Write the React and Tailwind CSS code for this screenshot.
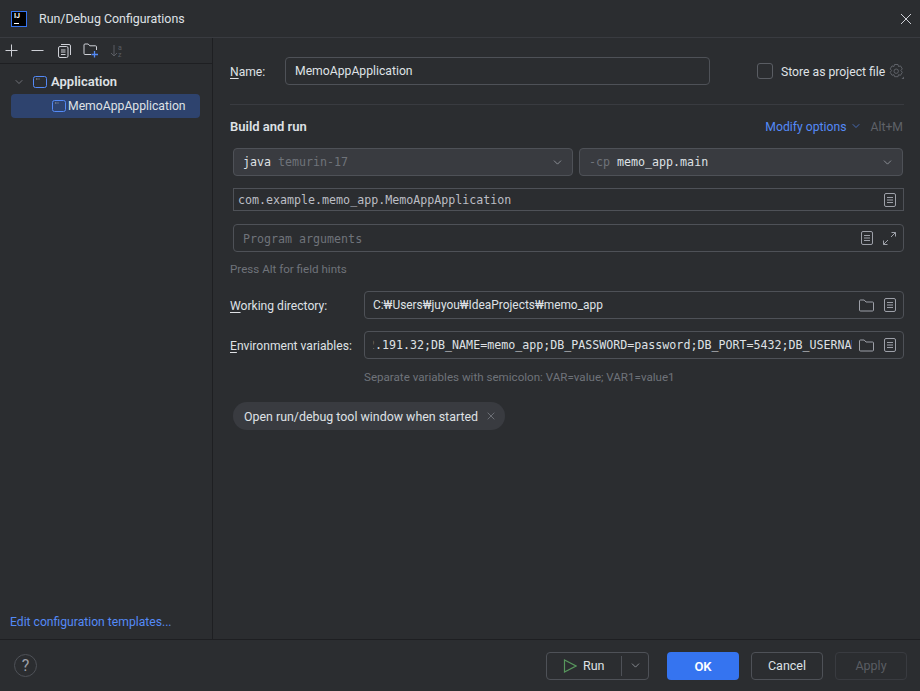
import React from 'react';
import { ChevronDown } from 'lucide-react';

const ui = "font-['Roboto','Noto_Sans_CJK_KR',sans-serif]";
const mono = "font-['DejaVu_Sans_Mono',monospace]";

function CrossIcon({ size = 12, color = "#ced0d6", className = "" }) {
  return (
    <svg width={size} height={size} viewBox="0 0 12 12" fill="none" stroke={color} className={`shrink-0 ${className}`}>
      <path d="M1 1l10 10M11 1L1 11" />
    </svg>
  );
}

// IntelliJ "copy" page icon, also used for the field text-editor button
function PageIcon() {
  return (
    <svg width="12" height="14" viewBox="0 0 12 14" fill="none" stroke="#9da0a8" strokeWidth="1" className="shrink-0">
      <rect x="0.5" y="0.5" width="11" height="13" rx="1.5" />
      <path d="M3 4.5h6M3 7h6M3 9.5h6" />
    </svg>
  );
}

function FolderIcon() {
  return (
    <svg width="15" height="13" viewBox="0 0 15 13" fill="none" stroke="#9da0a8" strokeWidth="1" className="shrink-0">
      <path d="M0.5 11v-9a1 1 0 0 1 1-1h3.7l1.8 2h6.5a1 1 0 0 1 1 1v7a1 1 0 0 1-1 1h-12a1 1 0 0 1-1-1z" />
    </svg>
  );
}

function AppIcon() {
  return (
    <svg width="14" height="12" viewBox="0 0 14 12" fill="none" className="shrink-0">
      <rect x="0.5" y="0.5" width="13" height="11" rx="2" stroke="#548af7" />
      <path d="M3 3h1.5M5.5 3h1" stroke="#9da0a8" />
    </svg>
  );
}

function Label({ first, rest, className = "" }) {
  return (
    <span className={`text-[12.1px] text-[#dfe1e5] whitespace-nowrap pt-[2px] ${className}`}>
      <span className="underline underline-offset-2">{first}</span>
      {rest}
    </span>
  );
}

function Sidebar() {
  return (
    <div className="w-[213px] shrink-0 border-r border-[#1e1f22] flex flex-col">
      {/* Toolbar */}
      <div className="h-[26px] border-b border-[#1e1f22] flex items-center pl-[5px] shrink-0">
        <svg width="13" height="13" viewBox="0 0 13 13" fill="none" stroke="#ced0d6" className="shrink-0">
          <path d="M6.5 0.5v12M0.5 6.5h12" />
        </svg>
        <svg width="13" height="13" viewBox="0 0 13 13" fill="none" stroke="#ced0d6" className="shrink-0 ml-[13px]">
          <path d="M0.5 6.5h12" />
        </svg>
        <svg width="13" height="14" viewBox="0 0 13 14" fill="none" stroke="#ced0d6" className="shrink-0 ml-[14px]">
          <rect x="0.5" y="2.5" width="9.5" height="11" rx="1.5" />
          <path d="M3 6h4.5M3 8h4.5M3 10.5h4.5M3 0.5h8a1.5 1.5 0 0 1 1.5 1.5v9" />
        </svg>
        <svg width="16" height="15" viewBox="0 0 16 15" fill="none" className="shrink-0 ml-[12px]">
          <path d="M8 11.5H2a1 1 0 0 1-1-1V2a1 1 0 0 1 1-1h3.2l1.6 1.8h5.7a1 1 0 0 1 1 1V7" stroke="#ced0d6" />
          <path d="M11.5 8v6.5M8.5 11.5h6.5" stroke="#548af7" strokeWidth="1.3" />
        </svg>
        <svg width="14" height="14" viewBox="0 0 14 14" fill="none" className="shrink-0 ml-[11px]">
          <path d="M4 1v11M1 9l3 3 3-3" stroke="#5a5d63" />
          <text x="8" y="6" fontSize="7" fill="#5a5d63" fontFamily="Roboto">a</text>
          <text x="8" y="13" fontSize="7" fill="#5a5d63" fontFamily="Roboto">z</text>
        </svg>
      </div>

      {/* Tree */}
      <div className="flex-1 pl-[11px] pr-[12px] pt-[6px]">
        <div className="h-[24px] flex items-center">
          <ChevronDown size={12} strokeWidth={1.2} color="#9da0a8" className="ml-[2px]" />
          <span className="ml-[8px]"><AppIcon /></span>
          <span className="ml-[4px] text-[13px] font-semibold text-[#dfe1e5]">Application</span>
        </div>
        <div className="h-[24px] rounded-[4px] bg-[#2e436e] flex items-center pl-[41px]">
          <AppIcon />
          <span className="ml-[2px] text-[12.2px] text-[#dfe1e5]">MemoAppApplication</span>
        </div>
      </div>

      <div className="h-[36px] pl-[10px] flex items-center shrink-0">
        <span className="text-[12.15px] text-[#548af7] pt-[2px]">Edit configuration templates...</span>
      </div>
    </div>
  );
}

function Select({ className, children }) {
  return (
    <div className={`h-[28px] rounded-[4px] border border-[#4e5157] bg-[#393b40] flex items-center justify-between pl-[9px] pr-[8px] ${className}`}>
      <span className={`${mono} text-[11.65px] whitespace-pre pt-[2px]`}>{children}</span>
      <ChevronDown size={13} strokeWidth={1.2} color="#b4b8bf" />
    </div>
  );
}

function Settings() {
  return (
    <div className="flex-1 min-w-0 pl-[17px] pr-[16px] pt-[19px]">
      {/* Name row */}
      <div className="h-[28px] flex items-center">
        <Label first="N" rest="ame:" className="w-[55px] shrink-0" />
        <div className="w-[425px] shrink-0 h-[28px] rounded-[4px] border border-[#4e5157] flex items-center pl-[9px]">
          <span className="text-[12.2px] text-[#dfe1e5] pt-[1px]">MemoAppApplication</span>
        </div>
        <div className="ml-[47px] w-[16px] h-[16px] rounded-[3px] border border-[#5a5d63] shrink-0" />
        <span className="ml-[8px] w-[104px] shrink-0 text-[12.2px] text-[#dfe1e5] whitespace-nowrap pt-[2px]">Store as project file</span>
        <svg width="15" height="15" viewBox="0 0 15 15" fill="none" stroke="#5f6268" className="ml-[4px] shrink-0">
          <path d="M5.5 0.5h3.5l.5 2 2-.6 1.8 3-1.4 1.6 1.4 1.8-1.8 3-2-.6-.5 2H5.5l-.5-2-2 .6-1.8-3 1.4-1.8-1.4-1.6 1.8-3 2 .6z" />
          <circle cx="7.2" cy="7.2" r="2.2" />
          <path d="M15 12.5V15h-2.5z" fill="#5f6268" stroke="none" />
        </svg>
      </div>

      <div className="mt-[19px] h-px bg-[#393b40]" />

      {/* Build and run header */}
      <div className="mt-[13px] h-[18px] flex items-center justify-between">
        <span className="text-[13px] font-semibold text-[#dfe1e5]">Build and run</span>
        <div className="flex items-center pr-[1px]">
          <span className="text-[12.2px] text-[#548af7]">Modify options</span>
          <ChevronDown size={12} strokeWidth={1.3} color="#548af7" className="ml-[3px] -mt-[2px]" />
          <span className="ml-[9px] text-[12.2px] text-[#5f6268]">Alt+M</span>
        </div>
      </div>

      <div className="ml-[3px] mt-[12px]">
        {/* JDK and classpath */}
        <div className="flex gap-[6px] mr-[1px]">
          <Select className="w-[340px] text-[#dfe1e5]">
            java <span className="text-[#6f737a]">temurin-17</span>
          </Select>
          <Select className="flex-1 text-[#dfe1e5]">
            <span className="text-[#6f737a]">-cp</span> memo_app.main
          </Select>
        </div>

        {/* Main class */}
        <div className="mt-[12px] h-[23px] border border-[#4e5157] flex items-center justify-between pl-[4px] pr-[7px]">
          <span className={`${mono} text-[11.65px] text-[#bcbec4] pt-[2px]`}>com.example.memo_app.MemoAppApplication</span>
          <PageIcon />
        </div>

        {/* Program arguments */}
        <div className="mt-[13px] h-[28px] rounded-[4px] border border-[#4e5157] flex items-center justify-between pl-[9px] pr-[6px]">
          <span className={`${mono} text-[11.65px] text-[#6f737a] pt-[3px]`}>Program arguments</span>
          <div className="flex items-center gap-[9px]">
            <PageIcon />
            <svg width="15" height="15" viewBox="0 0 15 15" fill="none" stroke="#9da0a8" className="shrink-0">
              <path d="M9.5 1.5h4v4M13.5 1.5L9 6M5.5 13.5h-4v-4M1.5 13.5L6 9" />
            </svg>
          </div>
        </div>
      </div>

      <div className="mt-[9px] h-[16px] flex items-center text-[11.6px] text-[#6f737a] pt-[2px]">Press Alt for field hints</div>

      {/* Working directory */}
      <div className="mt-[14px] h-[28px] flex items-center">
        <Label first="W" rest="orking directory:" className="w-[134px] shrink-0" />
        <div className="flex-1 min-w-0 h-[28px] rounded-[4px] border border-[#4e5157] flex items-center justify-between pl-[8px] pr-[7px]">
          <span className="text-[11.9px] text-[#dfe1e5] whitespace-nowrap pt-[1px]">C:₩Users₩juyou₩IdeaProjects₩memo_app</span>
          <div className="flex items-center gap-[10px]">
            <FolderIcon />
            <PageIcon />
          </div>
        </div>
      </div>

      {/* Environment variables */}
      <div className="mt-[12px] h-[28px] flex items-center">
        <Label first="E" rest="nvironment variables:" className="w-[134px] shrink-0" />
        <div className="flex-1 min-w-0 h-[28px] rounded-[4px] border border-[#4e5157] flex items-center pl-[8px] pr-[7px]">
          <div className="flex-1 min-w-0 overflow-hidden pt-[2px]">
            <div className={`${mono} -ml-[5px] whitespace-nowrap text-[11.65px] text-[#dfe1e5]`}>
              <span className="text-[#5a5d63]">2</span>.191.32;DB_NAME=memo_app;DB_PASSWORD=password;DB_PORT=5432;DB_USERNAME=postgres
            </div>
          </div>
          <div className="flex items-center gap-[10px] ml-[7px] shrink-0">
            <FolderIcon />
            <PageIcon />
          </div>
        </div>
      </div>

      <div className="mt-[10px] ml-[134px] h-[16px] flex items-center text-[11.6px] text-[#6f737a] whitespace-nowrap pt-[2px]">
        Separate variables with semicolon: VAR=value; VAR1=value1
      </div>

      {/* Option chip */}
      <div className="mt-[17px] ml-[3px] w-[272px] h-[28px] rounded-full bg-[#393b40] flex items-center pl-[11px]">
        <span className="text-[12.4px] text-[#dfe1e5] whitespace-nowrap pt-[2px]">Open run/debug tool window when started</span>
        <CrossIcon size={8} color="#878a91" className="ml-[9px]" />
      </div>
    </div>
  );
}

function Footer() {
  return (
    <div className="h-[52px] border-t border-[#1e1f22] flex items-center pl-[14px] pr-[13px] shrink-0">
      <div className="w-[23px] h-[23px] rounded-full border border-[#4e5157] flex items-center justify-center text-[16px] text-[#9da0a8]">?</div>
      <div className="ml-auto h-[28px] w-[103px] rounded-[4px] border border-[#4e5157] flex items-center">
        <svg width="14" height="14" viewBox="0 0 14 14" fill="none" stroke="#57965c" className="ml-[16px] shrink-0">
          <path d="M1.5 1v12L13 7z" strokeWidth="1.2" />
        </svg>
        <span className="ml-[6px] w-[38px] text-[12.5px] text-[#dfe1e5] pt-[2px]">Run</span>
        <div className="w-px h-[20px] bg-[#4e5157]" />
        <ChevronDown size={13} strokeWidth={1.2} color="#b4b8bf" className="ml-[7px]" />
      </div>
      <div className="ml-[18px] w-[72px] h-[28px] rounded-[4px] bg-[#3574f0] flex items-center justify-center text-[13px] font-semibold text-white pt-[2px]">OK</div>
      <div className="ml-[12px] w-[72px] h-[28px] rounded-[4px] border border-[#4e5157] flex items-center justify-center text-[12.5px] text-[#dfe1e5] pt-[2px]">Cancel</div>
      <div className="ml-[12px] w-[72px] h-[28px] rounded-[4px] border border-[#393b40] flex items-center justify-center text-[12.5px] text-[#5a5d63] pt-[2px]">Apply</div>
    </div>
  );
}

export default function App() {
  return (
    <div className={`w-[920px] h-[691px] bg-[#2b2d30] flex flex-col overflow-hidden ${ui}`}>
      {/* Title bar */}
      <div className="h-[38px] border-b border-[#393b40] flex items-center pl-[11px] pr-[8px] shrink-0">
        <div className="w-[16px] h-[16px] bg-black border-[1.5px] border-[#3574f0] relative shrink-0">
          <span className="absolute left-[2px] top-0 text-[7px] leading-[8px] font-bold text-white">IJ</span>
          <span className="absolute left-[2px] bottom-[2px] w-[5px] h-px bg-white" />
        </div>
        <span className="ml-[12px] text-[12.4px] text-[#dfe1e5] pt-[1px]">Run/Debug Configurations</span>
        <CrossIcon size={12} className="ml-auto" />
      </div>

      <div className="flex-1 flex min-h-0">
        <Sidebar />
        <Settings />
      </div>

      <Footer />
    </div>
  );
}
